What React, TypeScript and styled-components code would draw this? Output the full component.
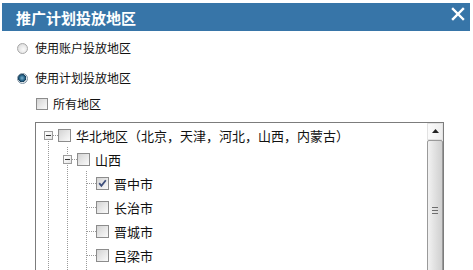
import React from "react";
import styled, { createGlobalStyle, css } from "styled-components";

const GlobalStyle = createGlobalStyle`
  html, body { margin: 0; padding: 0; background: #fff; }
  body {
    width: 473px; height: 270px; overflow: hidden;
    font-family: "Noto Sans CJK SC", "Noto Sans", sans-serif;
    color: #111;
  }
`;

const Dialog = styled.div`
  width: 468px;
  margin: 3px 0 0 2px;
`;

const TitleBar = styled.div`
  height: 28px;
  box-sizing: border-box;
  background: #3775a8;
  display: flex;
  align-items: center;
  justify-content: space-between;
  padding: 0 5px 0 14px;
`;

const Title = styled.span`
  color: #fff;
  font-size: 15px;
  font-weight: 700;
  line-height: 1;
`;

const CloseButton = styled.span`
  align-self: flex-start;
  margin-top: 4px;
  display: flex;
  width: 14px;
  height: 14px;
`;

const Body = styled.div`
  display: flex;
  flex-direction: column;
  padding: 7px 0 0 15px;
`;

const OptionRow = styled.label<{ $indent?: number; $top?: number; $gap?: number }>`
  display: flex;
  align-items: center;
  height: 20px;
  margin-left: ${(p) => p.$indent ?? 0}px;
  margin-top: ${(p) => p.$top ?? 0}px;
  gap: ${(p) => p.$gap ?? 7}px;
  font-size: 12px;
  line-height: 1;
  color: #111;
`;

const Radio = styled.span<{ $checked?: boolean }>`
  width: 11px;
  height: 11px;
  box-sizing: border-box;
  border-radius: 50%;
  border: 1px solid ${(p) => (p.$checked ? "#7f93a3" : "#a8a8a8")};
  background: ${(p) =>
    p.$checked
      ? "radial-gradient(circle at 45% 45%, #7fb3cf 0, #2c6a8f 35%, #123b57 55%, #e4e8ec 62%, #f4f4f4 100%)"
      : "radial-gradient(circle at 60% 60%, #fafafa 0, #e6e6e6 55%, #cfcfcf 100%)"};
`;

const CheckBox = styled.span<{ $size?: number }>`
  flex: none;
  width: ${(p) => p.$size ?? 12}px;
  height: ${(p) => p.$size ?? 12}px;
  box-sizing: border-box;
  border: 1px solid #8c8c8c;
  background: linear-gradient(135deg, #d3d3d3 0%, #e9e9e9 55%, #fafafa 100%);
  display: flex;
  align-items: center;
  justify-content: center;
`;

const TreeBox = styled.div`
  margin: 8px 0 0 18px;
  width: 409px;
  height: 160px;
  box-sizing: border-box;
  border: 1px solid #7c7c7c;
  display: flex;
  overflow: hidden;
`;

const TreeList = styled.div`
  flex: 1;
  display: flex;
  flex-direction: column;
  padding-left: 3px;
`;

const TreeRow = styled.div`
  display: flex;
  align-items: center;
  height: 24px;
  flex: none;
`;

const dotV = "repeating-linear-gradient(to bottom, #9a9a9a 0 1px, transparent 1px 2px)";
const dotH = "repeating-linear-gradient(to right, #9a9a9a 0 1px, transparent 1px 2px)";

const Guide = styled.span<{ $up?: boolean; $down?: boolean; $right?: boolean }>`
  flex: none;
  width: 19px;
  height: 24px;
  display: flex;
  align-items: center;
  justify-content: center;
  background-repeat: no-repeat;
  ${(p) => {
    const imgs: string[] = [];
    const pos: string[] = [];
    const size: string[] = [];
    if (p.$up) { imgs.push(dotV); pos.push("9px 0"); size.push("1px 12px"); }
    if (p.$down) { imgs.push(dotV); pos.push("9px 12px"); size.push("1px 12px"); }
    if (p.$right) { imgs.push(dotH); pos.push("10px 12px"); size.push("9px 1px"); }
    return imgs.length
      ? css`
          background-image: ${imgs.join(", ")};
          background-position: ${pos.join(", ")};
          background-size: ${size.join(", ")};
        `
      : "";
  }}
`;

const Expander = styled.span`
  width: 9px;
  height: 9px;
  box-sizing: border-box;
  border: 1px solid #9c9c9c;
  background: linear-gradient(135deg, #ffffff, #e6e6e6);
  display: flex;
  align-items: center;
  justify-content: center;
  margin-left: -1px;
  &::after {
    content: "";
    width: 5px;
    height: 1px;
    background: #333;
  }
`;

const NodeLabel = styled.span`
  margin-left: 5px;
  font-size: 13px;
  line-height: 1;
  color: #111;
  white-space: nowrap;
`;

const Scrollbar = styled.div`
  width: 16px;
  flex: none;
  display: flex;
  flex-direction: column;
  background: #f0f0f0;
`;

const ScrollButton = styled.div`
  height: 20px;
  box-sizing: border-box;
  border: 1px solid #e2e2e2;
  background: linear-gradient(to right, #fbfbfb, #eeeeee);
  display: flex;
  align-items: center;
  justify-content: center;
`;

const Thumb = styled.div`
  height: 170px;
  box-sizing: border-box;
  border: 1px solid #9a9a9a;
  border-radius: 2px;
  background: linear-gradient(to right, #f2f2f2 0%, #e2e2e2 45%, #d0d0d0 100%);
  display: flex;
  align-items: center;
  justify-content: center;
`;

const Grip = styled.span`
  width: 6px;
  height: 7px;
  background: repeating-linear-gradient(to bottom, #6d6d6d 0 1px, transparent 1px 3px);
`;

const CloseIcon = () => (
  <svg width="14" height="14" viewBox="0 0 14 14">
    <path d="M2 2 L12 12 M12 2 L2 12" stroke="#fff" strokeWidth="2.4" strokeLinecap="square" />
  </svg>
);

const CheckMark = () => (
  <svg width="9" height="9" viewBox="0 0 9 9">
    <path d="M1.2 4.2 L3.4 6.8 L7.8 1.2" fill="none" stroke="#3e4f7c" strokeWidth="1.8" />
  </svg>
);

const UpArrow = () => (
  <svg width="7" height="4" viewBox="0 0 7 4">
    <path d="M0 4 L3.5 0 L7 4 Z" fill="#222" />
  </svg>
);

const cities = [
  { name: "晋中市", checked: true },
  { name: "长治市" },
  { name: "晋城市" },
  { name: "吕梁市" },
];

export default function App() {
  return (
    <>
      <GlobalStyle />
      <Dialog>
        <TitleBar>
          <Title>推广计划投放地区</Title>
          <CloseButton>
            <CloseIcon />
          </CloseButton>
        </TitleBar>
        <Body>
          <OptionRow>
            <Radio />
            使用账户投放地区
          </OptionRow>
          <OptionRow $top={10}>
            <Radio $checked />
            使用计划投放地区
          </OptionRow>
          <OptionRow $indent={19} $top={6} $gap={5}>
            <CheckBox />
            所有地区
          </OptionRow>
          <TreeBox>
            <TreeList>
              <TreeRow>
                <Guide $down $right>
                  <Expander />
                </Guide>
                <CheckBox $size={13} />
                <NodeLabel>华北地区（北京，天津，河北，山西，内蒙古）</NodeLabel>
              </TreeRow>
              <TreeRow>
                <Guide $up $down />
                <Guide $up $down $right>
                  <Expander />
                </Guide>
                <CheckBox $size={13} />
                <NodeLabel>山西</NodeLabel>
              </TreeRow>
              {cities.map((c) => (
                <TreeRow key={c.name}>
                  <Guide $up $down />
                  <Guide $up $down />
                  <Guide $up $down $right />
                  <CheckBox $size={13}>{c.checked && <CheckMark />}</CheckBox>
                  <NodeLabel>{c.name}</NodeLabel>
                </TreeRow>
              ))}
              <TreeRow>
                <Guide $up $down />
                <Guide $up $down />
                <Guide $up $down />
              </TreeRow>
            </TreeList>
            <Scrollbar>
              <ScrollButton>
                <UpArrow />
              </ScrollButton>
              <Thumb>
                <Grip />
              </Thumb>
            </Scrollbar>
          </TreeBox>
        </Body>
      </Dialog>
    </>
  );
}
